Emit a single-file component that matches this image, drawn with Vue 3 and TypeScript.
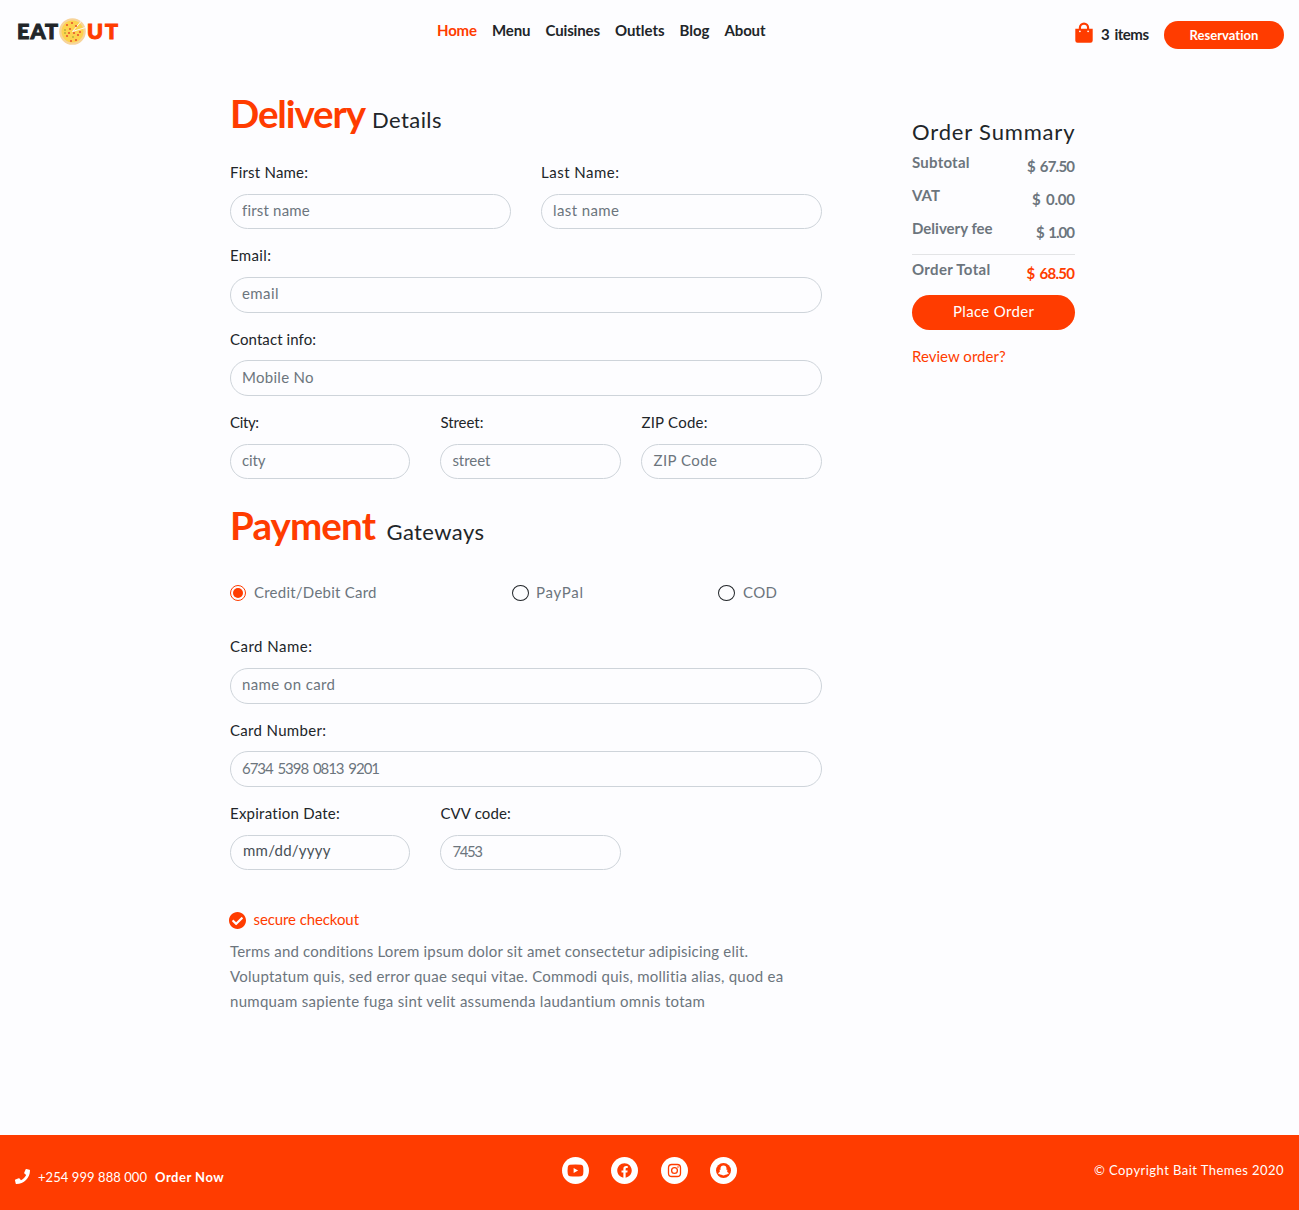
<script setup lang="ts">
import { ref } from 'vue'
import type { Directive } from 'vue'

// Tracks a label (or a placeholder) out so that it fills the given width.
// Amounts and numbers keep a wider gap between their groups.
const context = document.createElement('canvas').getContext('2d')
const vFit: Directive<HTMLElement, number> = {
  mounted(el, { value }) {
    if (!context) return
    const style = getComputedStyle(el)
    const text = el instanceof HTMLInputElement ? el.placeholder : (el.textContent ?? '').trim()
    const wordGap = /^[\d$]/.test(text) ? 2 : 0
    context.font = `${style.fontWeight} ${style.fontSize} ${style.fontFamily}`
    const natural = context.measureText(text).width + wordGap * (text.split(' ').length - 1)
    el.style.wordSpacing = `${wordGap}px`
    el.style.letterSpacing = `${((value - natural) / Math.max(text.length - 1, 1)).toFixed(3)}px`
    if (!(el instanceof HTMLInputElement)) el.style.width = `${value}px`
  },
}

interface Field {
  label: string
  labelWidth: number
  hint: string
  hintWidth: number
  dark?: boolean
}

const nav = [
  { text: 'Home', width: 40 },
  { text: 'Menu', width: 38.5 },
  { text: 'Cuisines', width: 54.5 },
  { text: 'Outlets', width: 49.5 },
  { text: 'Blog', width: 30 },
  { text: 'About', width: 41 },
]

const deliveryRows: { cols: string; fields: Field[] }[] = [
  {
    cols: 'two',
    fields: [
      { label: 'First Name:', labelWidth: 78, hint: 'first name', hintWidth: 67.5 },
      { label: 'Last Name:', labelWidth: 78, hint: 'last name', hintWidth: 66 },
    ],
  },
  { cols: 'one', fields: [{ label: 'Email:', labelWidth: 41, hint: 'email', hintWidth: 36.5 }] },
  { cols: 'one', fields: [{ label: 'Contact info:', labelWidth: 86, hint: 'Mobile No', hintWidth: 71.5 }] },
  {
    cols: 'three',
    fields: [
      { label: 'City:', labelWidth: 29, hint: 'city', hintWidth: 23.5 },
      { label: 'Street:', labelWidth: 43, hint: 'street', hintWidth: 38 },
      { label: 'ZIP Code:', labelWidth: 66.5, hint: 'ZIP Code', hintWidth: 64 },
    ],
  },
]

const cardRows: { cols: string; fields: Field[] }[] = [
  { cols: 'one', fields: [{ label: 'Card Name:', labelWidth: 82, hint: 'name on card', hintWidth: 93 }] },
  { cols: 'one', fields: [{ label: 'Card Number:', labelWidth: 96, hint: '6734 5398 0813 9201', hintWidth: 138 }] },
  {
    cols: 'three',
    fields: [
      { label: 'Expiration Date:', labelWidth: 110, hint: 'mm/dd/yyyy', hintWidth: 87.5, dark: true },
      { label: 'CVV code:', labelWidth: 71, hint: '7453', hintWidth: 30.5 },
    ],
  },
]

const method = ref('card')
const methods = [
  { id: 'card', text: 'Credit/Debit Card', width: 122.5 },
  { id: 'paypal', text: 'PayPal', width: 47 },
  { id: 'cod', text: 'COD', width: 34 },
]

const costs = [
  { text: 'Subtotal', width: 57.5, price: '$ 67.50', priceWidth: 48 },
  { text: 'VAT', width: 28, price: '$ 0.00', priceWidth: 43 },
  { text: 'Delivery fee', width: 81, price: '$ 1.00', priceWidth: 39 },
]

const terms = [
  { text: 'Terms and conditions Lorem ipsum dolor sit amet consectetur adipisicing elit.', width: 519 },
  { text: 'Voluptatum quis, sed error quae sequi vitae. Commodi quis, mollitia alias, quod ea', width: 554 },
  { text: 'numquam sapiente fuga sint velit assumenda laudantium omnis totam', width: 475.5 },
]

const toppings = [
  [8, 7], [13, 5], [17, 8], [6, 12], [11, 11], [19, 17], [8, 18],
  [14, 19], [21, 14], [12, 23], [17, 22], [6, 15], [10, 15], [15, 15],
]
</script>

<template>
  <div class="page">
    <header class="header">
      <div class="logo">
        <span v-fit="41">EAT</span>
        <svg class="pizza" viewBox="0 0 27 27">
          <circle cx="13.5" cy="13.5" r="13.3" fill="#f7d49a" />
          <circle cx="13.5" cy="13.5" r="11" fill="#fcd34f" />
          <path d="M13.5 13.5 22.8 2.5M13.5 13.5 26.5 9.5" stroke="#fffaf0" stroke-width="1" fill="none" />
          <circle
            v-for="([x, y], i) in toppings"
            :key="i"
            :cx="x"
            :cy="y"
            :r="i % 4 === 3 ? 0.8 : 1.1"
            :fill="i % 4 === 3 ? '#8b9b2c' : '#e8562d'"
          />
        </svg>
        <span v-fit="31" class="accent">UT</span>
      </div>
      <nav class="nav">
        <a v-for="(item, i) in nav" :key="item.text" v-fit="item.width" :class="{ accent: i === 0 }">{{ item.text }}</a>
      </nav>
      <div class="actions">
        <svg class="bag" viewBox="0 0 18 21">
          <path d="M4.9 7V5.700a4.100 4.100 0 0 1 8.200 0V7" fill="none" stroke="#ff3c00" stroke-width="2.200" />
          <path d="M.3 6.700h17.400v11.800a2.200 2.200 0 0 1-2.200 2.200h-13A2.200 2.200 0 0 1 .3 18.500Z" fill="#ff3c00" />
          <circle cx="4.9" cy="9.3" r=".9" fill="#fff" />
          <circle cx="13.1" cy="9.3" r=".9" fill="#fff" />
        </svg>
        <span v-fit="48" class="count">3 items</span>
        <button class="reserve"><span v-fit="69">Reservation</span></button>
      </div>
    </header>

    <main class="main">
      <form class="form" @submit.prevent>
        <h2><strong v-fit="136">Delivery</strong><span v-fit="69.5">Details</span></h2>
        <div v-for="(row, i) in deliveryRows" :key="i" class="row" :class="row.cols">
          <label v-for="f in row.fields" :key="f.label" class="field">
            <span v-fit="f.labelWidth">{{ f.label }}</span>
            <input v-fit="f.hintWidth" type="text" :placeholder="f.hint" />
          </label>
        </div>

        <h2 class="payment"><strong v-fit="146">Payment</strong><span v-fit="97.5">Gateways</span></h2>
        <div class="methods">
          <label v-for="m in methods" :key="m.id" class="method">
            <input v-model="method" type="radio" name="method" :value="m.id" />
            <span v-fit="m.width">{{ m.text }}</span>
          </label>
        </div>
        <div v-for="(row, i) in cardRows" :key="i" class="row" :class="row.cols">
          <label v-for="f in row.fields" :key="f.label" class="field">
            <span v-fit="f.labelWidth">{{ f.label }}</span>
            <input v-fit="f.hintWidth" type="text" :class="{ dark: f.dark }" :placeholder="f.hint" />
          </label>
        </div>

        <div class="secure accent">
          <svg viewBox="8 8 496 496">
            <path fill="currentColor" d="M504 256c0 136.967-111.033 248-248 248S8 392.967 8 256 119.033 8 256 8s248 111.033 248 248zM227.314 387.314l184-184c6.248-6.248 6.248-16.379 0-22.627l-22.627-22.627c-6.248-6.249-16.379-6.249-22.628 0L216 308.118l-70.059-70.059c-6.248-6.248-16.379-6.248-22.628 0l-22.627 22.627c-6.248 6.248-6.248 16.379 0 22.627l104 104c6.249 6.249 16.379 6.249 22.628.001z" />
          </svg>
          <span v-fit="105.5">secure checkout</span>
        </div>
        <p class="terms">
          <span v-for="line in terms" :key="line.width" v-fit="line.width">{{ line.text }}</span>
        </p>
      </form>

      <aside class="summary">
        <h3 v-fit="163">Order Summary</h3>
        <div v-for="c in costs" :key="c.text" class="cost">
          <span v-fit="c.width">{{ c.text }}</span>
          <span v-fit="c.priceWidth" class="price">{{ c.price }}</span>
        </div>
        <div class="cost total">
          <span v-fit="79">Order Total</span>
          <span v-fit="48.5" class="price accent">$ 68.50</span>
        </div>
        <button class="place"><span v-fit="81">Place Order</span></button>
        <a v-fit="94" class="review accent">Review order?</a>
      </aside>
    </main>

    <footer class="footer">
      <div class="phone">
        <svg viewBox="0 0 512 512">
          <path fill="#fff" d="M493.4 24.6l-104-24c-11.3-2.6-22.9 3.3-27.5 13.9l-48 112c-4.2 9.8-1.4 21.3 6.9 28l60.6 49.6c-36 76.7-98.9 140.5-177.2 177.2l-49.6-60.6c-6.8-8.3-18.2-11.1-28-6.9l-112 48C3.9 366.5-2 378.1.6 389.4l24 104C27.1 504.2 36.7 512 48 512c256.1 0 464-207.5 464-464 0-11.2-7.7-20.9-18.6-23.4z" />
        </svg>
        <span v-fit="109">+254 999 888 000</span>
        <strong v-fit="69">Order Now</strong>
      </div>
      <div class="social">
        <a aria-label="YouTube">
          <svg viewBox="0 0 27 27">
            <path d="M7.8 7.8q5.700-.7 11.400 0a2.300 2.300 0 0 1 2 2.100q.4 3.600 0 7.200a2.300 2.300 0 0 1-2 2.100q-5.700.6-11.400 0A2.300 2.300 0 0 1 5.800 17.100q-.5-3.600 0-7.200A2.300 2.300 0 0 1 7.800 7.800Z" fill="#ff3c00" />
            <path d="m11.600 10.900 4.500 2.600-4.500 2.600Z" fill="#fff" />
          </svg>
        </a>
        <a aria-label="Facebook">
          <svg viewBox="-206 -206 924 924">
            <path fill="#ff3c00" d="M504 256C504 119 393 8 256 8S8 119 8 256c0 123.780 90.690 226.380 209.250 245V327.690h-63V256h63v-54.640c0-62.150 37-96.480 93.670-96.480 27.140 0 55.520 4.840 55.520 4.840v61h-31.280c-30.800 0-40.410 19.120-40.410 38.730V256h68.780l-11 71.690h-57.780V501C413.310 482.380 504 379.780 504 256z" />
          </svg>
        </a>
        <a aria-label="Instagram">
          <svg viewBox="0 0 27 27" fill="none" stroke="#ff3c00" stroke-width="1.300">
            <rect x="7.500" y="7.500" width="12" height="12" rx="3.300" />
            <circle cx="13.500" cy="13.500" r="2.900" />
            <circle cx="17" cy="10" r=".8" fill="#ff3c00" stroke="none" />
          </svg>
        </a>
        <a aria-label="Snapchat">
          <svg viewBox="0 0 27 27">
            <circle cx="13.500" cy="13.500" r="7.500" fill="#ff3c00" />
            <path d="M13.500 8.600c1.900 0 3 1.300 3 3v1.300l.9-.1c.5.200.3.700-.5 1 .3 1.300 1 2 2 2.300-.1.600-.8.800-1.500.9l-.3.700c-1.200-.2-1.500 0-2.100.4-.9.600-2.100.6-3 0-.6-.4-.9-.6-2.100-.4l-.3-.7c-.7-.1-1.400-.3-1.500-.9 1-.3 1.700-1 2-2.300-.8-.3-1-.8-.5-1l.9.100v-1.300c0-1.700 1.100-3 3-3Z" fill="#fff" />
          </svg>
        </a>
      </div>
      <span v-fit="190" class="copyright">© Copyright Bait Themes 2020</span>
    </footer>
  </div>
</template>

<style>
body {
  background: #fdfdff;
}
</style>

<style scoped>
.page {
  display: flex;
  flex-direction: column;
  height: 1210px;
  overflow: hidden;
  box-sizing: border-box;
  background: #fdfdff;
  color: #212529;
  font: 400 15px/24px Lato, 'Josefin Sans', sans-serif;
}
.page *,
.page *::before {
  box-sizing: border-box;
}
span,
strong,
a {
  display: block;
  white-space: nowrap;
}
button,
input {
  font: inherit;
  border: 0;
  margin: 0;
}
.accent {
  color: #ff3c00;
}

.header {
  display: grid;
  grid-template-columns: 437px 1fr auto;
  height: 70px;
  flex: none;
}
.logo {
  display: flex;
  align-items: flex-start;
  gap: 1px;
  height: 27px;
  margin: 18px 0 0 17px;
  font-size: 21.5px;
  font-weight: 900;
  line-height: 26px;
  -webkit-text-stroke: 1px currentColor;
}
.pizza {
  width: 27px;
  height: 27px;
}
.nav {
  display: flex;
  gap: 15px;
  padding-top: 18px;
  font-weight: 700;
}
.actions {
  display: flex;
  align-items: flex-start;
  padding: 21px 15px 0 0;
}
.bag {
  width: 18px;
  height: 21px;
  margin: 1px 8px 0 0;
}
.count {
  margin-top: 1px;
  font-weight: 700;
}
.reserve {
  display: flex;
  justify-content: center;
  width: 120px;
  height: 28px;
  margin-left: 15px;
  padding: 2px 0 0;
  border-radius: 14px;
  background: #ff3c00;
  color: #fff;
  font-size: 13px;
  font-weight: 700;
}

.main {
  display: flex;
  flex: 1;
  padding: 18.2px 0 0 230px;
}
.form {
  width: 592px;
}
h2 {
  display: flex;
  gap: 6px;
  margin: 0 0 24px;
  padding-top: 0.7px;
  line-height: 48px;
  align-items: baseline;
  height: 48px;
  font-weight: 400;
}
h2 strong {
  color: #ff3c00;
  font-size: 38.5px;
  font-weight: 700;
}
h2 span {
  font-size: 22px;
}
.payment {
  gap: 10.5px;
  margin: 6.8px 0 32.8px;
}
.row {
  display: grid;
  height: 83.3px;
}
.two {
  grid-template-columns: 281px 281px;
  column-gap: 30px;
}
.one {
  grid-template-columns: 1fr;
}
.three {
  grid-template-columns: 210.4px 201px 180.6px;
}
.three .field input {
  width: 180.4px;
}
.field {
  display: flex;
  flex-direction: column;
  gap: 9.7px;
}
.field input {
  width: 100%;
  height: 35.6px;
  padding: 0 12px 3px 11px;
  border: 1px solid #ced4da;
  border-radius: 18px;
  background: transparent;
  outline: 0;
}
.field input::placeholder {
  color: #6c757d;
  opacity: 1;
}
.field input.dark {
  width: 180px;
  padding: 0 12px 5px;
}
.field input.dark::placeholder {
  color: #495057;
}
.methods {
  display: grid;
  grid-template-columns: 282px 206px 1fr;
  height: 24px;
  margin-bottom: 29.5px;
  color: #6c757d;
}
.method {
  display: flex;
  align-items: center;
  gap: 8px;
}
.method:last-child {
  gap: 9px;
}
.method span {
  margin-top: -2px;
}
.method input {
  appearance: none;
  display: grid;
  place-items: center;
  width: 16px;
  height: 16px;
  border: 1px solid #212529;
  border-radius: 50%;
}
.method:not(:first-child) input {
  width: 17px;
  margin-right: -1px;
}
.method input:checked {
  border-color: #ff3c00;
}
.method input:checked::before {
  content: '';
  width: 10px;
  height: 10px;
  border-radius: 50%;
  background: #ff3c00;
}
.secure {
  display: flex;
  align-items: center;
  gap: 7.5px;
  margin: 22.8px 0 8px -1px;
}
.secure svg {
  width: 17px;
  height: 17px;
  margin-top: 2px;
}
.terms {
  margin: 0;
  line-height: 25px;
  color: #6c757d;
}

.summary {
  width: 163px;
  margin: 29.3px 0 0 90px;
}
h3 {
  margin: 0 0 3.7px;
  padding-top: 1px;
  font-size: 22px;
  font-weight: 400;
  line-height: 28px;
  white-space: nowrap;
}
.cost {
  display: flex;
  justify-content: space-between;
  height: 33px;
  color: #6c757d;
  font-weight: 700;
}
.price {
  margin-top: 4px;
}
.price.accent {
  color: #ff3c00;
}
.total {
  height: 41px;
  margin-top: 5px;
  padding-top: 1.5px;
  border-top: 1px solid #e3e4e6;
}
.place {
  display: flex;
  justify-content: center;
  width: 163px;
  height: 35px;
  padding: 4px 0 0;
  border-radius: 18px;
  background: #ff3c00;
  color: #fff;
}
.review {
  margin-top: 14px;
}

.footer {
  display: grid;
  grid-template-columns: 547px 1fr auto;
  flex: none;
  height: 75px;
  padding: 0 15px;
  background: #ff3c00;
  color: #fff;
  font-size: 13px;
}
.phone {
  display: flex;
  gap: 8px;
  padding-top: 30px;
}
.phone svg {
  width: 15px;
  height: 15px;
  margin-top: 4px;
}
.social {
  display: flex;
  gap: 22.3px;
  padding-top: 22px;
}
.social a {
  width: 27px;
  height: 27px;
  border-radius: 50%;
  background: #fff;
}
.social svg {
  display: block;
  width: 27px;
  height: 27px;
}
.copyright {
  margin-top: 23px;
}
</style>
